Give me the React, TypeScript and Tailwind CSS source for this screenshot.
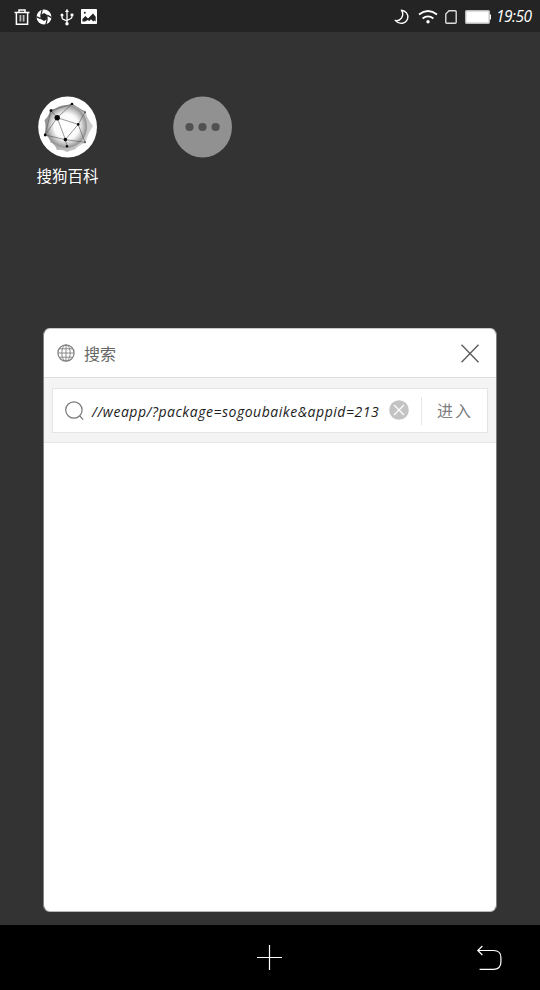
import type { ReactNode } from "react";

function TrashIcon() {
  return (
    <svg width="16" height="16" viewBox="0 0 16 16" fill="none" stroke="#fff" strokeWidth="1.5">
      <path d="M0.5 3.5H15.5M5 3V1H11V3M2.4 4V15.2H13.6V4" />
      <path d="M6.4 6V12.4M9.6 6V12.4" strokeWidth="1.8" stroke="#bbb" />
    </svg>
  );
}

function ApertureIcon() {
  return (
    <svg width="16" height="16" viewBox="0 0 16 16">
      <circle cx="8" cy="8" r="7.5" fill="#fff" />
      <path d="M8 4L11.8 6.2L11.4 9.9L8 12.1L4.3 9.8L4.5 6.1Z" fill="#242424" />
      <path d="M4.8 6.6L6.3 0.2M11.5 6.4L15.6 8.6M11.3 9.6L9.8 15.8M4.6 9.6L0.3 7.6" stroke="#242424" strokeWidth="1.2" />
    </svg>
  );
}

function UsbIcon() {
  return (
    <svg width="14" height="18" viewBox="0 0 14 18" fill="none" stroke="#fff" strokeWidth="1.3">
      <path d="M7 3V15M2 7V9.5Q2 11 4 11.6L7 13M12 6.5V8.5Q12 10.4 10 11L7 12.4" />
      <path d="M5 4L7 0.8L9 4Z" fill="#fff" stroke="none" />
      <circle cx="7" cy="15.8" r="1.7" fill="#fff" stroke="none" />
      <circle cx="2" cy="7" r="1.5" fill="#fff" stroke="none" />
      <path d="M10.6 5.6H13.4V8.2H10.6Z" fill="#fff" stroke="none" />
    </svg>
  );
}

function PhotoIcon() {
  return (
    <svg width="16" height="15" viewBox="0 0 16 15">
      <rect width="16" height="15" rx="0.8" fill="#fff" />
      <path d="M1.4 12.6V10L4.4 7L7 9.6L12 4.4L14.7 7.8V12.6L13.4 11.4L12.2 12.6L10 10.2L8.4 12L6.6 11L4.2 12.6Z" fill="#242424" />
      <circle cx="3.8" cy="3.8" r="1" fill="#242424" />
    </svg>
  );
}

function StatusBar() {
  return (
    <header className="flex h-8 shrink-0 items-center bg-[#242424] pl-[14px] pr-[7px] pt-px">
      <div className="flex items-center">
        <TrashIcon />
        <div className="ml-[6px]"><ApertureIcon /></div>
        <div className="ml-[8px]"><UsbIcon /></div>
        <div className="ml-[7px]"><PhotoIcon /></div>
      </div>
      <div className="ml-auto flex items-center">
        <svg width="16" height="16" viewBox="0 0 16 16" fill="none" stroke="#fff" strokeWidth="1.4">
          <path d="M7.4 1.2C12 1.8 14.8 5.6 13.6 9.8C12 14.6 5.6 16.4 1.2 11.4C6.4 12.8 11 6.6 7.4 1.2Z" strokeLinejoin="round" />
        </svg>
        <svg className="ml-[8px]" width="20" height="16" viewBox="0 0 20 16" fill="none" stroke="#fff" strokeWidth="1.9">
          <path d="M1 5.6Q10-1.4 19 5.6M4.6 9.4Q10 5.4 15.4 9.4" />
          <circle cx="10" cy="12.8" r="1.7" fill="#fff" stroke="none" />
        </svg>
        <svg className="ml-[7px]" width="12" height="14" viewBox="0 0 12 14" fill="none" stroke="#ddd" strokeWidth="1.4">
          <path d="M4 0.8H10.2Q11.2 0.8 11.2 1.8V12.2Q11.2 13.2 10.2 13.2H1.8Q0.8 13.2 0.8 12.2V4Z" />
        </svg>
        <svg className="ml-[8px]" width="26" height="14" viewBox="0 0 26 14">
          <rect x="0.7" y="0.7" width="23.6" height="12.6" rx="1" fill="#fff" stroke="#bbb" strokeWidth="1.4" />
          <path d="M24.8 4.5H26V9.5H24.8Z" fill="#fff" />
        </svg>
        <span className="ml-[5px] w-[37px] whitespace-nowrap font-['Open_Sans',sans-serif] text-[15.5px] italic leading-none tracking-[-0.5px] text-white">19:50</span>
      </div>
    </header>
  );
}

const nodes = [
  [13, 14.6, 1.4], [34, 8, 1.3], [47, 16.2, 1], [19.2, 21.7, 2.7], [40.2, 28.4, 1.3],
  [7.2, 39, 1.4], [27.4, 43.6, 1.8], [29, 50.2, 1.2], [47, 46.3, 1],
];

function BaikeLogo() {
  return (
    <svg width="60" height="62" viewBox="0 0 60 62">
      <defs>
        <radialGradient id="orb" cx="0.5" cy="0.5" r="0.5">
          <stop offset="0" stopColor="#fff" />
          <stop offset="0.6" stopColor="#fafafa" />
          <stop offset="0.82" stopColor="#c2c2c2" />
          <stop offset="1" stopColor="#8e8e8e" />
        </radialGradient>
        <linearGradient id="rim" x1="0" y1="0" x2="1" y2="0.4">
          <stop offset="0" stopColor="#8c8c8c" />
          <stop offset="1" stopColor="#cfcfcf" />
        </linearGradient>
      </defs>
      <ellipse cx="29.6" cy="31" rx="29.4" ry="30.5" fill="#fff" />
      <path d="M12 13.5Q17 14 21.5 10.5Q28 11 34 7.5Q39 13 47.5 15Q48.5 22 55 30Q49.5 38 47.5 47Q42 48 37 53.5Q33 54 29 56Q24 53 19 54Q17 48 12.5 46.5Q11.5 41 6.5 38.5Q8.5 31 6.5 24Q11.5 20 12 13.5Z" fill="url(#rim)" />
      <ellipse cx="28.5" cy="30.5" rx="20.5" ry="21.5" fill="url(#orb)" />
      <path d="M13 14.6L34 8L47 16.2L40.2 28.4L27.4 43.6L7.2 39L19.2 21.7L27.4 43.6L29 50.2M13 14.6L19.2 21.7L40.2 28.4L47 46.3L27.4 43.6M19.2 21.7L34 8M13 14.6L7.2 39" fill="none" stroke="#555" strokeWidth="0.6" />
      {nodes.map(([x, y, r]) => (
        <circle key={`${x}-${y}`} cx={x} cy={y} r={r} fill={r === 1 ? "#555" : "#080808"} />
      ))}
    </svg>
  );
}

function AppShortcut({ label, children }: { label?: string; children: ReactNode }) {
  return (
    <div className="flex w-[135px] flex-col items-center">
      {children}
      {label && (
        <span className="mt-[8px] font-['Noto_Sans_CJK_SC',sans-serif] text-[15.5px] leading-[18px] text-white">{label}</span>
      )}
    </div>
  );
}

function SearchPanel() {
  return (
    <section className="flex h-[584px] flex-col overflow-hidden rounded-[7px] border border-x-[#808080] border-b-[#b8b8b8] border-t-[#c8c8c8] bg-white">
      <div className="flex h-[49px] shrink-0 items-center border-b border-[#dedede] pl-[13px] pr-[16px]">
        <svg width="18" height="18" viewBox="0 0 18 18" fill="none" stroke="#808080" strokeWidth="0.9">
          <circle cx="9" cy="9" r="8.1" strokeWidth="1.2" />
          <ellipse cx="9" cy="9" rx="4.2" ry="8" />
          <path d="M9 1V17M1 9H17M2.5 4.8H15.5M2.5 13.2H15.5" />
        </svg>
        <h1 className="ml-[9px] font-['Noto_Sans_CJK_SC',sans-serif] text-[16px] font-normal leading-5 text-[#666]">搜索</h1>
        <svg className="ml-auto mr-px" width="18" height="19" viewBox="0 0 18 19" fill="none" stroke="#606060" strokeWidth="1.5">
          <path d="M0.5 0.8L17.5 18.2M17.5 0.8L0.5 18.2" />
        </svg>
      </div>
      <div className="h-[65px] shrink-0 border-b border-[#e6e6e6] bg-[#f4f4f4] px-[8px] pt-[10px]">
        <div className="flex h-[45px] items-center border border-[#e4e4e4] bg-white pl-[12px]">
          <svg className="shrink-0" width="19" height="20" viewBox="0 0 19 20" fill="none" stroke="#777" strokeWidth="1.2">
            <circle cx="8.9" cy="9" r="8.2" />
            <path d="M14.8 15L18.2 18.6" />
          </svg>
          <span className="ml-[8px] mt-[2px] w-[297px] shrink-0 whitespace-nowrap font-['Open_Sans',sans-serif] text-[14px] italic leading-5 tracking-[0.52px] text-[#1c1c1c]">//weapp/?package=sogoubaike&amp;appid=213</span>
          <svg className="-mt-px shrink-0" width="20" height="20" viewBox="0 0 20 20">
            <circle cx="10" cy="10" r="9.8" fill="#c3c3c3" />
            <path d="M5 5L15 15M15 5L5 15" stroke="#fff" strokeWidth="1.2" />
          </svg>
          <div className="ml-[12px] h-[28px] w-px bg-[#e6e6e6]" />
          <button className="-mt-px ml-[15px] whitespace-nowrap font-['Noto_Sans_CJK_SC',sans-serif] text-[16px] leading-5 tracking-[2px] text-[#808080]">进入</button>
        </div>
      </div>
    </section>
  );
}

function Toolbar() {
  return (
    <nav className="grid h-[65px] shrink-0 grid-cols-3 items-center bg-black">
      <span />
      <svg className="mr-px justify-self-center" width="25" height="25" viewBox="0 0 25 25" stroke="#fff" strokeWidth="1.2">
        <path d="M12.5 0V25M0 12.5H25" />
      </svg>
      <svg className="mr-[38px] mt-[1px] justify-self-end" width="26" height="26" viewBox="0 0 26 26" fill="none" stroke="#fff" strokeWidth="1.2">
        <path d="M6.4 1L1.8 5.5L6.4 10M1.8 5.5H17.5Q24.9 5.5 24.9 12.5V17Q24.9 24.3 17.5 24.3H3.6" />
      </svg>
    </nav>
  );
}

export default function App() {
  return (
    <main className="flex h-[990px] w-[540px] flex-col overflow-hidden bg-[#333]">
      <StatusBar />
      <div className="flex h-[296px] shrink-0 items-start pt-16">
        <AppShortcut label="搜狗百科">
          <BaikeLogo />
        </AppShortcut>
        <AppShortcut>
          <svg width="60" height="62" viewBox="0 0 60 62">
            <ellipse cx="29.6" cy="31" rx="29.4" ry="30.5" fill="#919191" />
            <g fill="#515151">
              <circle cx="16.5" cy="31" r="4.1" />
              <circle cx="29.5" cy="31" r="4.1" />
              <circle cx="42.6" cy="31" r="4.1" />
            </g>
          </svg>
        </AppShortcut>
      </div>
      <div className="flex-1 px-[43px]">
        <SearchPanel />
      </div>
      <Toolbar />
    </main>
  );
}
